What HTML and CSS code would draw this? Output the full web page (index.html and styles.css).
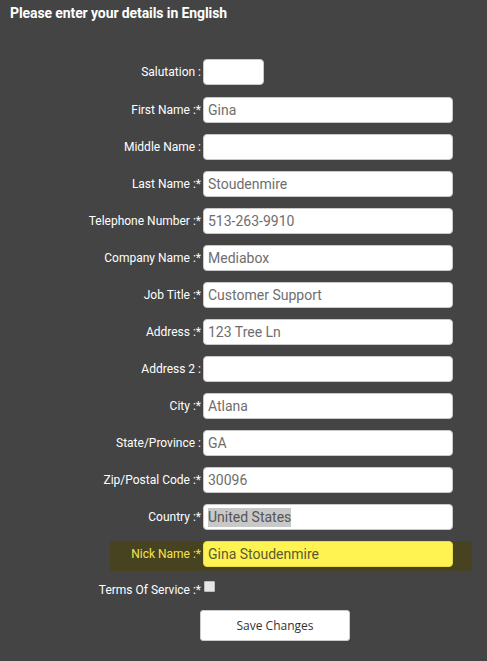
FILE: index.html
```html
<!DOCTYPE html>
<html>
<head>
<meta charset="utf-8">
<link rel="stylesheet" href="styles.css">
</head>
<body>
<div class="page">
  <h1 class="title">Please enter your details in English</h1>
  <form class="form">
    <div class="row first"><label class="lbl">Salutation :</label><div class="inp short"></div></div>
    <div class="row"><label class="lbl">First Name :*</label><div class="inp">Gina</div></div>
    <div class="row"><label class="lbl">Middle Name :</label><div class="inp"></div></div>
    <div class="row"><label class="lbl">Last Name :*</label><div class="inp">Stoudenmire</div></div>
    <div class="row"><label class="lbl">Telephone Number :*</label><div class="inp">513-263-9910</div></div>
    <div class="row"><label class="lbl">Company Name :*</label><div class="inp">Mediabox</div></div>
    <div class="row"><label class="lbl">Job Title :*</label><div class="inp">Customer Support</div></div>
    <div class="row"><label class="lbl">Address :*</label><div class="inp">123 Tree Ln</div></div>
    <div class="row"><label class="lbl">Address 2 :</label><div class="inp"></div></div>
    <div class="row"><label class="lbl">City :*</label><div class="inp">Atlana</div></div>
    <div class="row"><label class="lbl">State/Province :</label><div class="inp">GA</div></div>
    <div class="row"><label class="lbl">Zip/Postal Code :*</label><div class="inp">30096</div></div>
    <div class="row"><label class="lbl">Country :*</label><div class="inp"><span class="sel">United States</span></div></div>
    <div class="row highlight"><label class="lbl">Nick Name :*</label><div class="inp yellow">Gina Stoudenmire</div></div>
    <div class="row terms"><label class="lbl">Terms Of Service :*</label><span class="check"></span></div>
    <div class="actions"><button type="button" class="btn">Save Changes</button></div>
  </form>
</div>
</body>
</html>
```
FILE: styles.css
```css
html, body {
  margin: 0;
  padding: 0;
  background: #444444;
}
.page {
  width: 487px;
  height: 661px;
  background: #444444;
  font-family: Roboto, "Liberation Sans", sans-serif;
  overflow: hidden;
}
.title {
  margin: 0;
  padding: 5px 0 0 10px;
  font-size: 14px;
  line-height: 17px;
  font-weight: bold;
  color: #ffffff;
  letter-spacing: -0.1px;
}
.form {
  display: flex;
  flex-direction: column;
  gap: 11px;
  padding-top: 37px;
}
.row {
  display: flex;
  align-items: center;
  gap: 2px;
  height: 26px;
}
.row.first {
  margin-bottom: 1px;
}
.lbl {
  flex: 0 0 201px;
  text-align: right;
  font-size: 12px;
  color: #ffffff;
}
.inp {
  box-sizing: border-box;
  width: 250px;
  height: 26px;
  background: #ffffff;
  border: 1px solid #c9c9c9;
  border-radius: 4px;
  padding: 0 4px;
  font-size: 14px;
  line-height: 24px;
  color: #6e6e6e;
  white-space: nowrap;
}
.inp.short {
  width: 61px;
}
.sel {
  background: #c8c8c8;
  color: #555555;
  padding: 1px 0 2px 0;
}
.row.highlight {
  margin-left: 110px;
  width: 362px;
  height: 30px;
  align-items: flex-start;
  background: #47421f;
}
.row.highlight .lbl {
  flex: 0 0 91px;
  color: #f5e54c;
  line-height: 26px;
}
.inp.yellow {
  background: #fff352;
  border-color: #e8dc4a;
  color: #5b5a30;
}
.row.terms {
  height: 14px;
  margin-top: -1px;
}
.row.terms .lbl {
  position: relative;
  top: 2px;
}
.check {
  display: inline-block;
  box-sizing: border-box;
  width: 11px;
  height: 11px;
  background: #e6e6e6;
  border: 1px solid #bdbdbd;
  border-radius: 1px;
  margin-left: 1px;
  margin-top: -3px;
}
.actions {
  padding-left: 200px;
  margin-top: 4px;
}
.btn {
  box-sizing: border-box;
  width: 150px;
  height: 31px;
  background: #ffffff;
  border: 1px solid #cccccc;
  border-radius: 3px;
  font-family: "Open Sans", "DejaVu Sans", sans-serif;
  font-size: 12px;
  color: #333333;
  padding: 0;
}
```
